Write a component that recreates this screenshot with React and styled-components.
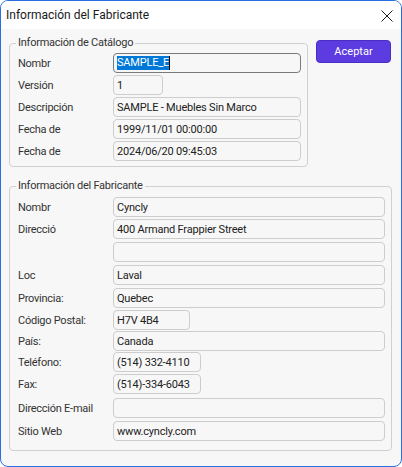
import React from 'react';
import styled, { createGlobalStyle } from 'styled-components';

const GlobalStyle = createGlobalStyle`
	body {
		margin: 0;
		background: #ffffff;
		font-family: Roboto, 'Liberation Sans', sans-serif;
	}
`;

const catalog = [
	{ label: 'Nombr', value: 'SAMPLE_E', focused: true },
	{ label: 'Versión', value: '1', width: 50 },
	{ label: 'Descripción', value: 'SAMPLE - Muebles Sin Marco' },
	{ label: 'Fecha de', value: '1999/11/01 00:00:00' },
	{ label: 'Fecha de', value: '2024/06/20 09:45:03' },
];

const maker = [
	{ label: 'Nombr', value: 'Cyncly', gap: 0 },
	{ label: 'Direcció', value: '400 Armand Frappier Street', gap: 2 },
	{ label: '', value: '', gap: 3 },
	{ label: 'Loc', value: 'Laval', gap: 3 },
	{ label: 'Provincia:', value: 'Quebec', gap: 3 },
	{ label: 'Código Postal:', value: 'H7V 4B4', width: 77, gap: 2 },
	{ label: 'País:', value: 'Canada', gap: 1 },
	{ label: 'Teléfono:', value: '(514) 332-4110', width: 88, gap: 1 },
	{ label: 'Fax:', value: '(514)-334-6043', width: 88, gap: 2 },
	{ label: 'Dirección E-mail', value: '', gap: 4 },
	{ label: 'Sitio Web', value: 'www.cyncly.com', gap: 3 },
];

const FieldRow = ({ row, gap }) => (
	<Row gap={row.gap ?? gap}>
		<Label>{row.label}</Label>
		<Field width={row.width} focused={row.focused}>
			{row.focused ? (
				<>
					<Selected>{row.value}</Selected>
					<Caret />
				</>
			) : (
				row.value
			)}
		</Field>
	</Row>
);

export default function App() {
	return (
		<>
			<GlobalStyle />
			<Window>
				<TitleBar>
					<Title>Información del Fabricante</Title>
					<svg width="12" height="12" viewBox="0 0 12 12">
						<path d="M0.5 0.5 L11.5 11.5 M11.5 0.5 L0.5 11.5" stroke="#1c1c1c" strokeWidth="1" fill="none" />
					</svg>
				</TitleBar>
				<Body>
					<Group top={3} bottom={5}>
						<Legend>Información de Catálogo</Legend>
						{catalog.map((row, i) => (
							<FieldRow key={i} row={row} gap={i === 0 ? 0 : 2} />
						))}
					</Group>
					<OkButton>Aceptar</OkButton>
					<Group wide top={4} bottom={9}>
						<Legend>Información del Fabricante</Legend>
						{maker.map((row, i) => (
							<FieldRow key={i} row={row} />
						))}
					</Group>
				</Body>
			</Window>
		</>
	);
}

const Window = styled.div`
	width: 402px;
	height: 467px;
	box-sizing: border-box;
	border: 1px solid #2a6fe0;
	border-radius: 8px;
	overflow: hidden;
	background: #f7f7f7;
	display: flex;
	flex-direction: column;
`;

const TitleBar = styled.div`
	height: 28px;
	flex: none;
	background: #ffffff;
	display: flex;
	align-items: center;
	justify-content: space-between;
	padding: 0 8px 0 5px;
	svg {
		margin-top: 1px;
	}
`;

const Title = styled.div`
	font-size: 12px;
	color: #1a1a1a;
`;

const Body = styled.div`
	display: grid;
	grid-template-columns: 299px 76px;
	column-gap: 8px;
	row-gap: 12px;
	align-items: start;
	padding: 7px 0 0 8px;
`;

const Group = styled.fieldset`
	grid-column: ${(p) => (p.wide ? '1 / span 2' : 'auto')};
	margin: 0;
	min-width: 0;
	border: 1px solid #d0d0d0;
	border-radius: 4px;
	padding: ${(p) => `${p.top}px 6px ${p.bottom}px 8px`};
	display: flex;
	flex-direction: column;
`;

const Legend = styled.legend`
	font-size: 11px;
	letter-spacing: -0.25px;
	line-height: 14px;
	color: #333333;
	padding: 0 2px;
	margin-left: -2px;
`;

const Row = styled.div`
	display: flex;
	align-items: center;
	height: 20px;
	margin-top: ${(p) => p.gap}px;
`;

const Label = styled.div`
	width: 95px;
	flex: none;
	font-size: 11px;
	letter-spacing: -0.25px;
	color: #333333;
	white-space: nowrap;
`;

const Field = styled.div`
	box-sizing: border-box;
	height: 20px;
	${(p) => (p.width ? `width: ${p.width}px; flex: none;` : 'flex: 1;')}
	border: 1px solid ${(p) => (p.focused ? '#7a7a7a' : '#cdcdcd')};
	border-radius: 4px;
	padding: 0 3px;
	display: flex;
	align-items: center;
	font-size: 11px;
	letter-spacing: -0.2px;
	color: #222222;
	white-space: nowrap;
	overflow: hidden;
`;

const Selected = styled.span`
	background: #0078d7;
	color: #ffffff;
	line-height: 14px;
`;

const Caret = styled.span`
	width: 1px;
	height: 14px;
	background: #000000;
`;

const OkButton = styled.button`
	margin-top: 4px;
	width: 75px;
	height: 23px;
	border: 1px solid #4a2ec4;
	border-radius: 4px;
	background: #5c3be0;
	color: #ffffff;
	font-family: inherit;
	font-size: 11px;
	padding: 0;
`;
